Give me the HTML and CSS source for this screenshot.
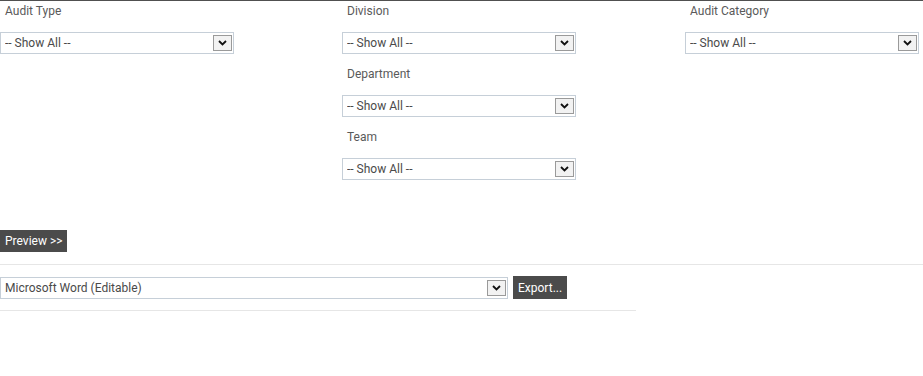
FILE: index.html
```html
<!DOCTYPE html>
<html lang="en">
<head>
  <meta charset="UTF-8">
  <meta name="viewport" content="width=device-width, initial-scale=1.0">
  <title>Audit Report</title>
  <link rel="stylesheet" href="styles.css">
</head>
<body>
  <div class="layout">
    <div class="filters">
      <div class="col">
        <div class="field">
          <label class="label">Audit Type</label>
          <div class="select-wrap">
            <select class="select"><option>-- Show All --</option></select>
            <span class="arrow"><svg width="9" height="6" viewBox="0 0 9 6"><path d="M1 1 L4.5 4.5 L8 1" fill="none" stroke="#111" stroke-width="1.8"/></svg></span>
          </div>
        </div>
      </div>
      <div class="col">
        <div class="field">
          <label class="label">Division</label>
          <div class="select-wrap">
            <select class="select"><option>-- Show All --</option></select>
            <span class="arrow"><svg width="9" height="6" viewBox="0 0 9 6"><path d="M1 1 L4.5 4.5 L8 1" fill="none" stroke="#111" stroke-width="1.8"/></svg></span>
          </div>
        </div>
        <div class="field">
          <label class="label">Department</label>
          <div class="select-wrap">
            <select class="select"><option>-- Show All --</option></select>
            <span class="arrow"><svg width="9" height="6" viewBox="0 0 9 6"><path d="M1 1 L4.5 4.5 L8 1" fill="none" stroke="#111" stroke-width="1.8"/></svg></span>
          </div>
        </div>
        <div class="field">
          <label class="label">Team</label>
          <div class="select-wrap">
            <select class="select"><option>-- Show All --</option></select>
            <span class="arrow"><svg width="9" height="6" viewBox="0 0 9 6"><path d="M1 1 L4.5 4.5 L8 1" fill="none" stroke="#111" stroke-width="1.8"/></svg></span>
          </div>
        </div>
      </div>
      <div class="col">
        <div class="field">
          <label class="label">Audit Category</label>
          <div class="select-wrap">
            <select class="select"><option>-- Show All --</option></select>
            <span class="arrow"><svg width="9" height="6" viewBox="0 0 9 6"><path d="M1 1 L4.5 4.5 L8 1" fill="none" stroke="#111" stroke-width="1.8"/></svg></span>
          </div>
        </div>
      </div>
    </div>

    <div class="actions">
      <button class="btn">Preview &gt;&gt;</button>
    </div>

    <div class="export">
      <div class="export-row">
        <div class="select-wrap wide">
          <select class="select"><option>Microsoft Word (Editable)</option></select>
          <span class="arrow"><svg width="9" height="6" viewBox="0 0 9 6"><path d="M1 1 L4.5 4.5 L8 1" fill="none" stroke="#111" stroke-width="1.8"/></svg></span>
        </div>
        <button class="btn">Export...</button>
      </div>
    </div>
  </div>
</body>
</html>
```
FILE: styles.css
```css
html, body {
  margin: 0;
  padding: 0;
  background: #fff;
}
.layout {
  font-family: Roboto, "Liberation Sans", Arial, sans-serif;
  font-size: 12px;
  color: #5a5a5a;
  border-top: 1px solid #505050;
}
.filters {
  display: grid;
  grid-template-columns: 342px 343px 1fr;
}
.field {
  margin-bottom: 10px;
}
.label {
  display: block;
  line-height: 20px;
  padding-left: 5px;
  margin-bottom: 11px;
}
.select-wrap {
  position: relative;
  width: 234px;
  height: 22px;
}
.select-wrap.wide {
  width: 508px;
}
.select {
  -webkit-appearance: none;
  appearance: none;
  display: block;
  width: 100%;
  height: 22px;
  margin: 0;
  padding: 0 4px;
  border: 1px solid #c6cfd8;
  border-radius: 0;
  background: #fff;
  font-family: inherit;
  font-size: 12px;
  color: #4a4a4a;
  outline: none;
}
.arrow {
  position: absolute;
  right: 2px;
  top: 3px;
  width: 19px;
  height: 16px;
  border: 1px solid #9a9a9a;
  background: #f2f2f2;
  box-sizing: border-box;
  display: flex;
  align-items: center;
  justify-content: center;
  pointer-events: none;
}
.actions {
  padding: 40px 0 12px;
  border-bottom: 1px solid #e6e6e6;
}
.btn {
  display: block;
  height: 22px;
  margin: 0;
  padding: 0 5px;
  border: none;
  border-radius: 0;
  background: #4b4b4b;
  color: #fff;
  font-family: inherit;
  font-size: 12px;
}
.export {
  width: 636px;
  padding: 12px 0 11px;
  border-bottom: 1px solid #e6e6e6;
}
.export-row {
  display: flex;
  gap: 5px;
}
.export-row .btn {
  height: 23px;
  margin-top: -1px;
}
```
